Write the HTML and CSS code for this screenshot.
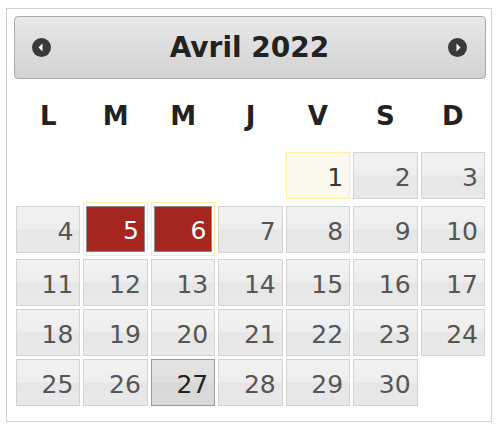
FILE: index.html
```html
<!DOCTYPE html>
<html>
    <head>
        <meta charset="utf-8">
        <title>Calendrier</title>
        <link rel="stylesheet" href="styles.css">
    </head>
    <body>
        <div class="picker">
            <div class="picker-head">
                <a class="nav" href="javascript:;" title="Précédent">
                    <svg width="19" height="19" viewBox="0 0 19 19"><circle cx="9.5" cy="9.5" r="9.5" fill="#3a3a3a"/><polygon points="6.5,9.5 10.5,5.5 10.5,13.5" fill="#fff"/></svg>
                </a>
                <span class="title">Avril 2022</span>
                <a class="nav" href="javascript:;" title="Suivant">
                    <svg width="19" height="19" viewBox="0 0 19 19"><circle cx="9.5" cy="9.5" r="9.5" fill="#3a3a3a"/><polygon points="12.5,9.5 8.5,5.5 8.5,13.5" fill="#fff"/></svg>
                </a>
            </div>
            <div class="week">
                <span>L</span><span>M</span><span>M</span><span>J</span><span>V</span><span>S</span><span>D</span>
            </div>
            <div class="days">
                <span></span><span></span><span></span><span></span>
                <a class="day today" href="javascript:;">1</a>
                <a class="day" href="javascript:;">2</a>
                <a class="day" href="javascript:;">3</a>
                <a class="day" href="javascript:;">4</a>
                <span class="picked"><a class="day" href="javascript:;">5</a></span>
                <span class="picked"><a class="day" href="javascript:;">6</a></span>
                <a class="day" href="javascript:;">7</a>
                <a class="day" href="javascript:;">8</a>
                <a class="day" href="javascript:;">9</a>
                <a class="day" href="javascript:;">10</a>
                <a class="day" href="javascript:;">11</a>
                <a class="day" href="javascript:;">12</a>
                <a class="day" href="javascript:;">13</a>
                <a class="day" href="javascript:;">14</a>
                <a class="day" href="javascript:;">15</a>
                <a class="day" href="javascript:;">16</a>
                <a class="day" href="javascript:;">17</a>
                <a class="day" href="javascript:;">18</a>
                <a class="day" href="javascript:;">19</a>
                <a class="day" href="javascript:;">20</a>
                <a class="day" href="javascript:;">21</a>
                <a class="day" href="javascript:;">22</a>
                <a class="day" href="javascript:;">23</a>
                <a class="day" href="javascript:;">24</a>
                <a class="day" href="javascript:;">25</a>
                <a class="day" href="javascript:;">26</a>
                <a class="day hover" href="javascript:;">27</a>
                <a class="day" href="javascript:;">28</a>
                <a class="day" href="javascript:;">29</a>
                <a class="day" href="javascript:;">30</a>
                <span></span>
            </div>
        </div>
    </body>
</html>
```

FILE: styles.css
```css
*{
    margin: 0;
    padding: 0;
    box-sizing: border-box;
}
body{
    font-family: "DejaVu Sans", Verdana, sans-serif;
    background-color: #fff;
}
.picker{
    width: 486px;
    height: 414px;
    margin: 8px 0 0 6px;
    padding: 7px 5px 0 7px;
    border: 1px solid #d0d0d0;
}
.picker-head{
    height: 63px;
    border: 1px solid #aaa;
    border-radius: 4px;
    background: linear-gradient(#e8e8e8, #d2d2d2);
    display: flex;
    align-items: center;
    justify-content: space-between;
    padding: 0 18px 0 17px;
}
.nav{
    width: 19px;
    height: 19px;
    display: block;
}
.nav svg{
    display: block;
}
.title{
    font-size: 28px;
    font-weight: bold;
    color: #222;
}
.week,
.days{
    display: grid;
    grid-template-columns: repeat(7, 1fr);
    column-gap: 3px;
    margin: 0 1px 0 2px;
}
.week{
    height: 73px;
    align-items: center;
    text-align: center;
    font-size: 26px;
    font-weight: bold;
    color: #222;
}
.days{
    row-gap: 3px;
    align-items: center;
}
.day{
    display: block;
    height: 47px;
    padding: 11px 6px 6px;
    border: 1px solid #d3d3d3;
    background: linear-gradient(#f2f2f2 0%, #eeeeee 48%, #e6e6e6 52%, #e9e9e9 100%);
    color: #555;
    font-size: 25px;
    line-height: 28px;
    text-align: right;
    text-decoration: none;
}
.day.today{
    border-color: #fcefa1;
    background: #fbf9ee;
    color: #363636;
}
.day.hover{
    border-color: #999;
    background: linear-gradient(#e4e4e4 0%, #dedede 50%, #d8d8d8 52%, #dadada 100%);
    color: #212121;
}
.picked{
    display: block;
    border: 1px solid #fcefa1;
    padding: 3px 2px;
}
.picked .day{
    height: 46px;
    padding: 10px 5px 6px;
    border-color: #8a8a8a;
    background: #a52621;
    color: #fff;
}
```
